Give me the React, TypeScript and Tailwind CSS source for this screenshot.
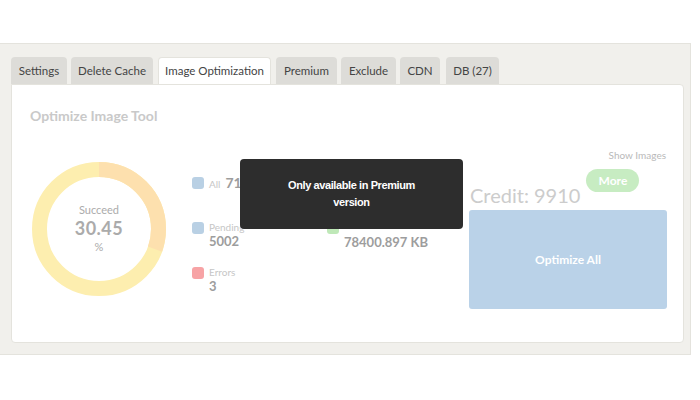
import React from 'react'

const TABS = [
  { label: 'Settings', cls: 'w-[56px]' },
  { label: 'Delete Cache', cls: 'w-[82px] ml-[4px]' },
  { label: 'Image Optimization', cls: 'w-[113px] ml-[5px]', active: true },
  { label: 'Premium', cls: 'w-[61px] ml-[5px]' },
  { label: 'Exclude', cls: 'w-[55px] ml-[4px]' },
  { label: 'CDN', cls: 'w-[40px] ml-[4px]' },
  { label: 'DB (27)', cls: 'w-[53px] ml-[6px]' },
]

function Donut() {
  const r = 59.5
  const c = 2 * Math.PI * r
  const pct = 30.45
  return (
    <div className="relative w-[134px] h-[134px]">
      <svg width="134" height="134" viewBox="0 0 134 134">
        <circle cx="67" cy="67" r={r} fill="none" stroke="#fdeeaf" strokeWidth="15" />
        <circle
          cx="67"
          cy="67"
          r={r}
          fill="none"
          stroke="#fde0ae"
          strokeWidth="15"
          strokeDasharray={`${(c * pct) / 100} ${c}`}
          transform="rotate(-90 67 67)"
        />
      </svg>
      <div className="absolute inset-0 flex flex-col items-center justify-center text-[#ababab]">
        <span className="text-[11px] leading-[14px]">Succeed</span>
        <span className="text-[18px] leading-[22px] font-bold tracking-wide">30.45</span>
        <span className="text-[11px] leading-[16px]">%</span>
      </div>
    </div>
  )
}

function Legend({ color, label, value, inline }: { color: string; label: string; value: string; inline?: boolean }) {
  return (
    <div className="flex items-start gap-[5px] h-[45px]">
      <div className={`w-[12px] h-[12px] rounded-[3px] mt-[1px] shrink-0 ${color}`} />
      {inline ? (
        <div className="flex items-baseline gap-[5px]">
          <span className="text-[10px] leading-[14px] text-[#c6c6c6]">{label}</span>
          <span className="text-[14px] leading-[14px] font-bold text-[#9d9d9d]">{value}</span>
        </div>
      ) : (
        <div className="flex flex-col">
          <span className="text-[10px] leading-[12px] text-[#c6c6c6]">{label}</span>
          <span className="text-[13px] leading-[16px] font-bold text-[#9d9d9d]">{value}</span>
        </div>
      )}
    </div>
  )
}

export default function App() {
  return (
    <div className="w-[700px] h-[400px] bg-white pt-[43px]" style={{ fontFamily: 'Lato, "Open Sans", sans-serif' }}>
      <div className="w-[691px] h-[312px] bg-[#f1f0ec] border-t border-r border-b border-[#e4e3dd] pt-[13px] pl-[11px]">
        <div className="flex h-[27px]">
          {TABS.map(t => (
            <div
              key={t.label}
              className={`${t.cls} flex items-center justify-center rounded-t-[4px] text-[11.5px] text-[#444] whitespace-nowrap ${
                t.active ? 'bg-white border border-b-0 border-[#e4e3dd]' : 'bg-[#dddcd8]'
              }`}
            >
              {t.label}
            </div>
          ))}
        </div>
        <div className="relative w-[673px] h-[259px] bg-white border border-[#e4e3dd] rounded-b-[4px] rounded-tr-[4px] pt-[22px] pl-[18px]">
          <h2 className="text-[14px] font-bold text-[#c9c9c9] leading-[18px]">Optimize Image Tool</h2>

          <div className="flex mt-[20px]">
            <div className="ml-[2px] mt-[17px]">
              <Donut />
            </div>

            <div className="ml-[26px] mt-[31px] flex flex-col w-[135px]">
              <Legend color="bg-[#b9d0e4]" label="All" value="7184" inline />
              <Legend color="bg-[#b9d0e4]" label="Pending" value="5002" />
              <Legend color="bg-[#f7a3a5]" label="Errors" value="3" />
            </div>

            <div className="mt-[77px] flex items-start gap-[5px]">
              <div className="w-[12px] h-[12px] rounded-[3px] bg-[#bfe8b8] shrink-0" />
              <div className="flex flex-col">
                <span className="text-[10px] leading-[6px] text-[#c6c6c6]">Saved</span>
                <span className="mt-[6px] text-[13px] leading-[16px] font-bold text-[#9d9d9d]">78400.897 KB</span>
              </div>
            </div>

            <div className="ml-auto mr-[16px] w-[198px]">
              <div className="mt-[3px] text-right text-[10px] text-[#b9b9b9] pr-[1px] leading-[14px]">Show Images</div>
              <div className="flex items-start h-[48px]">
                <span className="text-[20px] text-[#cccccc] leading-[24px] mt-[21px] ml-[1px] whitespace-nowrap">Credit: 9910</span>
                <button className="ml-[6px] mt-[7px] w-[53px] h-[23px] rounded-full bg-[#c7ecc2] text-white text-[12px] font-bold">More</button>
              </div>
              <div className="h-[99px] bg-[#bad2e8] rounded-[3px] flex items-center justify-center text-white text-[12px] font-bold">
                Optimize All
              </div>
            </div>
          </div>

          <div
            className="absolute left-[228px] top-[74px] w-[223px] h-[70px] bg-[#2d2d2d] rounded-[4px] flex items-center justify-center text-center text-white text-[11px] font-bold leading-[17px] tracking-[-0.4px] px-[40px]"
            style={{ fontFamily: '"Liberation Sans", Arial, sans-serif' }}
          >
            Only available in Premium version
          </div>
        </div>
      </div>
    </div>
  )
}
